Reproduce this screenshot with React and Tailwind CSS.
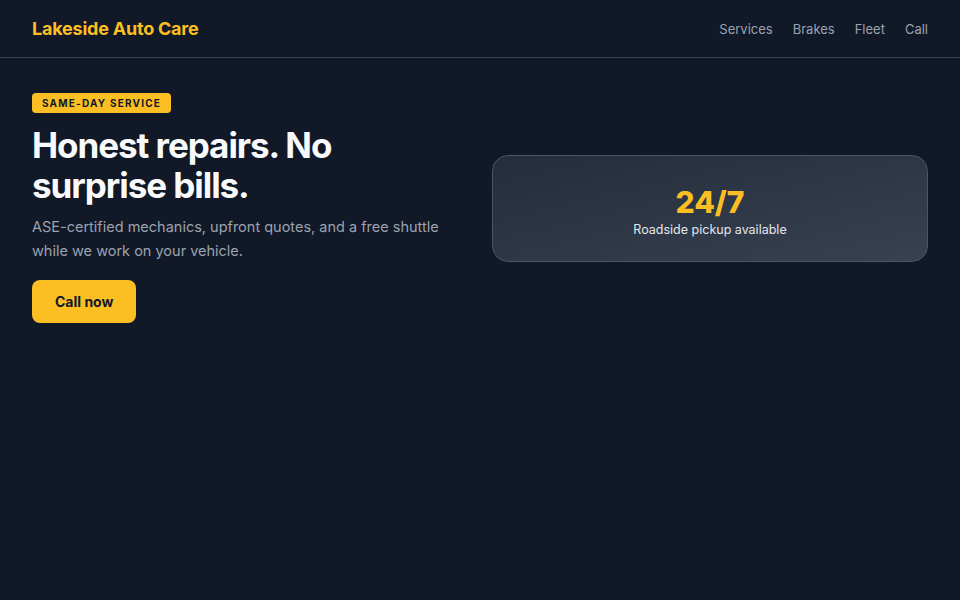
export default function App() {
  const nav = ["Services", "Brakes", "Fleet", "Call"];
  return (
    <div
      className="min-h-screen bg-[#111827] text-white"
      style={{ fontFamily: "Inter, 'Noto Sans', sans-serif" }}
    >
      <header className="flex items-center justify-between border-b border-[#374151] px-8 pb-4 pt-[17px]">
        <div className="text-lg font-bold leading-6 tracking-[-0.012em] text-[#fbbf24]">
          Lakeside Auto Care
        </div>
        <nav className="flex items-center gap-5 text-[13px] text-[#9ca3af]">
          {nav.map((item) => (
            <a key={item} href="#" className="leading-6">
              {item}
            </a>
          ))}
        </nav>
      </header>

      <section className="grid grid-cols-2 items-center gap-6 px-8 pt-[35px]">
        <div className="flex flex-col items-start">
          <span className="rounded bg-[#fbbf24] px-2.5 py-1 text-[10px] font-bold uppercase leading-3 tracking-[0.12em] text-[#111827]">
            Same-day service
          </span>
          <h1 className="mt-3 text-[35px] font-bold leading-10 tracking-[-0.03em] text-[#f9fafb]">
            Honest repairs. No
            <br />
            surprise bills.
          </h1>
          <p className="mt-2.5 text-[14.5px] leading-6 text-[#9ca3af]">
            ASE-certified mechanics, upfront quotes, and a free shuttle while we
            work on your vehicle.
          </p>
          <button className="mt-[17px] rounded-lg bg-[#fbbf24] px-[23px] py-3 text-sm font-bold leading-[19px] text-[#111827]">
            Call now
          </button>
        </div>

        <div className="flex flex-col items-center rounded-2xl border border-[#4b5563] bg-gradient-to-br from-[#242d3b] to-[#374151] pb-[21px] pt-7">
          <div className="text-3xl font-extrabold leading-9 text-[#fbbf24]">
            24/7
          </div>
          <div className="text-[12.5px] leading-5 text-[#e5e7eb]">
            Roadside pickup available
          </div>
        </div>
      </section>
    </div>
  );
}
